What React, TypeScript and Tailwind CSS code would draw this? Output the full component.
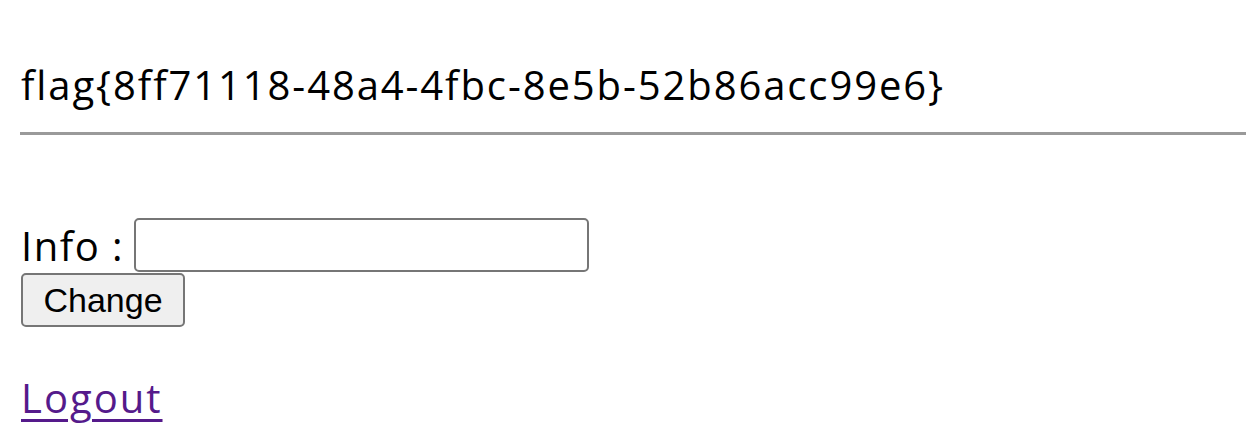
export default function App() {
  return (
    <div className="bg-white min-h-[448px] pl-5 pt-5 text-black font-['Open_Sans','Noto_Sans',sans-serif] text-[40px]">
      <div className="mt-[38px] pl-[1px] leading-[53px] tracking-[1.9px]">flag{'{'}8ff71118-48a4-4fbc-8e5b-52b86acc99e6{'}'}</div>
      <hr className="mt-[21px] border-0 border-t-[3px] border-[#9a9a9a]" />
      <form className="mt-[83px]" onSubmit={(e) => e.preventDefault()}>
        <div className="flex items-end h-[54px]">
          <label className="leading-[53px] mr-[10px] pl-[1px] tracking-[1.5px]">Info :</label>
          <input
            type="text"
            className="w-[455px] h-[54px] border-[2px] border-[#767676] rounded-[5px] px-2 text-[34px] font-['Liberation_Sans',Arial,sans-serif]"
          />
        </div>
        <button
          type="submit"
          className="block mt-[1px] ml-[1px] h-[54px] w-[164px] bg-[#efefef] border-[2px] border-[#767676] rounded-[5px] text-[34px] font-['Liberation_Sans',Arial,sans-serif] text-black"
        >
          Change
        </button>
      </form>
      <a href="#" className="block mt-[44px] ml-[1px] w-fit leading-[53px] tracking-[2px] text-[#551a8b] underline underline-offset-[6px] decoration-[3px]">
        Logout
      </a>
    </div>
  );
}
